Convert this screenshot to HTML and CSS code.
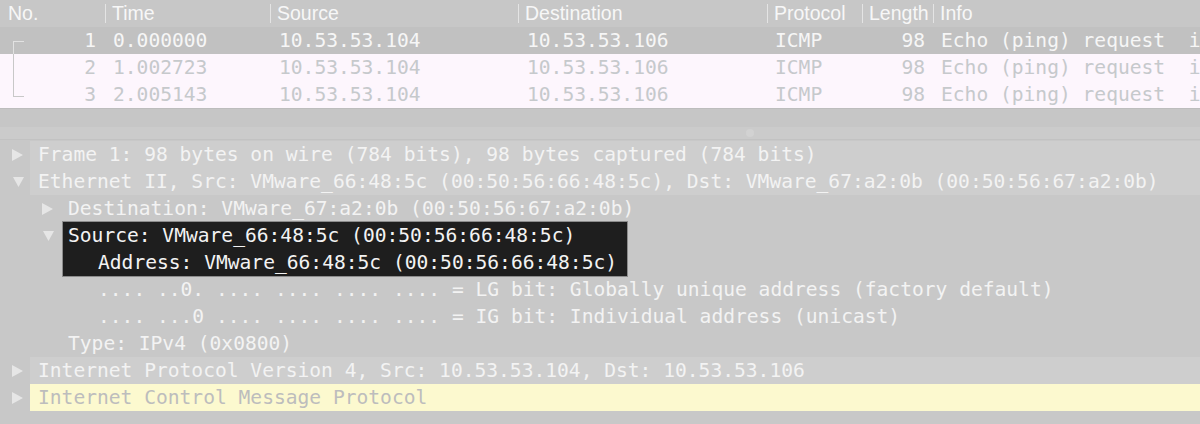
FILE: index.html
```html
<!DOCTYPE html>
<html>
<head>
<meta charset="utf-8">
<link rel="stylesheet" href="styles.css">
</head>
<body>
<div class="app">
  <div class="plist">
    <div class="prow head">
      <div class="hc c-no">No.</div>
      <div class="hc c-time sep">Time</div>
      <div class="hc c-src sep">Source</div>
      <div class="hc c-dst sep">Destination</div>
      <div class="hc c-proto sep">Protocol</div>
      <div class="hc c-len sep">Length</div>
      <div class="hc c-info sep">Info</div>
    </div>
    <div class="prow data sel">
      <div class="dc c-no"><span class="tree t-first"></span><span class="num">1</span></div>
      <div class="dc c-time">0.000000</div>
      <div class="dc c-src">10.53.53.104</div>
      <div class="dc c-dst">10.53.53.106</div>
      <div class="dc c-proto">ICMP</div>
      <div class="dc c-len">98</div>
      <div class="dc c-info">Echo (ping) request  id=0x0f3c, seq=1/256, ttl=64</div>
    </div>
    <div class="prow data">
      <div class="dc c-no"><span class="tree t-mid"></span><span class="num">2</span></div>
      <div class="dc c-time">1.002723</div>
      <div class="dc c-src">10.53.53.104</div>
      <div class="dc c-dst">10.53.53.106</div>
      <div class="dc c-proto">ICMP</div>
      <div class="dc c-len">98</div>
      <div class="dc c-info">Echo (ping) request  id=0x0f3c, seq=2/512, ttl=64</div>
    </div>
    <div class="prow data">
      <div class="dc c-no"><span class="tree t-last"></span><span class="num">3</span></div>
      <div class="dc c-time">2.005143</div>
      <div class="dc c-src">10.53.53.104</div>
      <div class="dc c-dst">10.53.53.106</div>
      <div class="dc c-proto">ICMP</div>
      <div class="dc c-len">98</div>
      <div class="dc c-info">Echo (ping) request  id=0x0f3c, seq=3/768, ttl=64</div>
    </div>
  </div>
  <div class="gap"></div>
  <div class="splitter"><span class="handle"></span></div>
  <div class="details">
    <div class="drow top">
      <span class="tw"><svg class="tri" width="11" height="12" viewBox="0 0 11 12"><path d="M0 0 L11 6 L0 12 Z"/></svg></span>
      <span class="txt">Frame 1: 98 bytes on wire (784 bits), 98 bytes captured (784 bits)</span>
    </div>
    <div class="drow top">
      <span class="tw"><svg class="tri down" width="11" height="10" viewBox="0 0 11 10"><path d="M0 0 L11 0 L5.5 10 Z"/></svg></span>
      <span class="txt">Ethernet II, Src: VMware_66:48:5c (00:50:56:66:48:5c), Dst: VMware_67:a2:0b (00:50:56:67:a2:0b)</span>
    </div>
    <div class="drow l1">
      <span class="tw"><svg class="tri" width="11" height="12" viewBox="0 0 11 12"><path d="M0 0 L11 6 L0 12 Z"/></svg></span>
      <span class="txt">Destination: VMware_67:a2:0b (00:50:56:67:a2:0b)</span>
    </div>
    <div class="drow l1 group">
      <span class="tw tw-top"><svg class="tri down" width="11" height="10" viewBox="0 0 11 10"><path d="M0 0 L11 0 L5.5 10 Z"/></svg></span>
      <div class="selbox">
        <div class="sline">Source: VMware_66:48:5c (00:50:56:66:48:5c)</div>
        <div class="sline sub">Address: VMware_66:48:5c (00:50:56:66:48:5c)</div>
      </div>
    </div>
    <div class="drow l2"><span class="txt">.... ..0. .... .... .... .... = LG bit: Globally unique address (factory default)</span></div>
    <div class="drow l2"><span class="txt">.... ...0 .... .... .... .... = IG bit: Individual address (unicast)</span></div>
    <div class="drow l1b"><span class="txt">Type: IPv4 (0x0800)</span></div>
    <div class="drow top">
      <span class="tw"><svg class="tri" width="11" height="12" viewBox="0 0 11 12"><path d="M0 0 L11 6 L0 12 Z"/></svg></span>
      <span class="txt">Internet Protocol Version 4, Src: 10.53.53.104, Dst: 10.53.53.106</span>
    </div>
    <div class="drow top icmp">
      <span class="tw"><svg class="tri" width="11" height="12" viewBox="0 0 11 12"><path d="M0 0 L11 6 L0 12 Z"/></svg></span>
      <span class="txt">Internet Control Message Protocol</span>
    </div>
  </div>
</div>
</body>
</html>
```

FILE: styles.css
```css
html, body {
  margin: 0;
  padding: 0;
  background: #c8c8c8;
}
.app {
  width: 1200px;
  height: 424px;
  overflow: hidden;
  display: flex;
  flex-direction: column;
  background: #c8c8c8;
}
.app > * { flex: none; }
.plist {
  display: flex;
  flex-direction: column;
  border-bottom: 1px solid #bdbdbd;
}
.prow {
  display: grid;
  grid-template-columns: 105px 165px 248px 249px 95px 71px 1fr;
  height: 27px;
  flex: none;
  overflow: hidden;
}
.head {
  background: #c7c7c7;
  font-family: "Liberation Sans", Arial, sans-serif;
  font-size: 19.5px;
  color: #f7f7f7;
}
.hc {
  white-space: nowrap;
  overflow: hidden;
  line-height: 27px;
  padding: 0 2px 0 7px;
}
.hc.c-no { padding-left: 8px; }
.hc.sep {
  position: relative;
}
.hc.sep::before {
  content: "";
  position: absolute;
  left: 0;
  top: 4px;
  height: 19px;
  border-left: 1px solid #e4e4e4;
}
.data {
  background: #fdf6fd;
  color: #c6c9cc;
  font-family: "DejaVu Sans Mono", Menlo, monospace;
  font-size: 19.6px;
  line-height: 27px;
}
.data.sel {
  background: #c1c1c1;
  color: #f6f6f6;
}
.dc {
  white-space: pre;
  overflow: hidden;
  padding-left: 8px;
}
.dc.c-src, .dc.c-dst { padding-left: 9px; }
.dc.c-len {
  text-align: right;
  padding: 0 8px 0 0;
}
.dc.c-no {
  display: flex;
  padding: 0 9px 0 0;
}
.num { margin-left: auto; }
.tree {
  display: block;
  flex: none;
  width: 11px;
  margin-left: 13px;
  box-sizing: border-box;
  border-left: 1px solid #c8c8c8;
}
.t-first {
  margin-top: 14px;
  height: 13px;
  border-top: 1px solid #e2e2e2;
  border-left-color: #e2e2e2;
}
.t-mid { height: 27px; }
.t-last {
  height: 16px;
  border-bottom: 1px solid #c8c8c8;
}
.gap {
  height: 18px;
  background: #c6c6c6;
}
.splitter {
  height: 12px;
  background: #cbcbcb;
  border-bottom: 1px solid #c2c2c2;
  display: flex;
  align-items: center;
  justify-content: center;
}
.handle {
  width: 8px;
  height: 8px;
  border-radius: 50%;
  background: #d2d2d2;
  margin-left: 300px;
}
.details {
  display: flex;
  flex-direction: column;
  font-family: "DejaVu Sans Mono", Menlo, monospace;
  font-size: 19.6px;
  color: #f3f3f3;
  padding-top: 1px;
}
.drow {
  display: flex;
  flex: none;
  align-items: stretch;
  min-height: 27px;
  line-height: 27px;
}
.txt, .sline { white-space: pre; }
.tw {
  display: flex;
  align-items: center;
  width: 30px;
  flex: none;
  box-sizing: border-box;
  padding-left: 12px;
}
.tri { fill: #e6e6e6; flex: none; }
.tri.down { margin-left: 1px; }
.drow.top .txt {
  flex: 1;
  background: #cecece;
  padding-left: 8px;
}
.drow.l1 {
  padding-left: 30px;
}
.drow.l1 .tw { width: 32px; }
.drow.l1 .txt { padding-left: 6px; }
.drow.l1b { padding-left: 68px; }
.drow.l2 { padding-left: 98px; }
.tw.tw-top {
  align-items: flex-start;
  padding-top: 9px;
  height: 27px;
}
.selbox {
  background: #1e1e1e;
  border: 1px solid #8c8c8c;
  width: 564px;
  margin-top: -1px;
  margin-bottom: -1px;
  flex: none;
}
.sline { padding-left: 5px; height: 27px; }
.sline.sub { padding-left: 35px; }
.drow.icmp .txt {
  background: #fcf9cf;
  color: #bdbdbd;
}
```
